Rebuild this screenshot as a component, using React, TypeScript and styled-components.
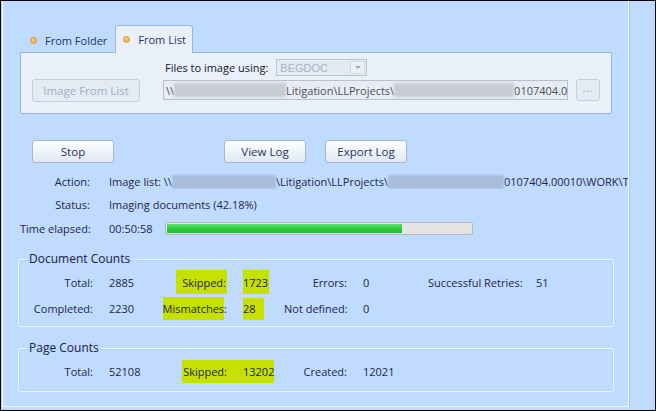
import React from "react";
import styled, { createGlobalStyle } from "styled-components";

const GlobalStyle = createGlobalStyle`
  html, body {
    margin: 0;
    padding: 0;
    background: #ffffff;
  }
  body {
    font-family: "Open Sans", "Noto Sans", "DejaVu Sans", sans-serif;
    font-size: 11px;
    color: #1f2548;
  }
`;

const BLUE = "#bfdbff";

const Frame = styled.div`
  width: 656px;
  height: 411px;
  box-sizing: border-box;
  border: 1px solid #000;
  background: ${BLUE};
  display: flex;
  overflow: hidden;
`;

const MainPanel = styled.div`
  width: 627px;
  height: 406px;
  margin-left: 1px;
  box-sizing: border-box;
  border: 1px solid #eef5ff;
  border-top: none;
  box-shadow: 1px 0 0 #a8c6ee;
  padding: 24px 16px 0 17px;
  overflow: hidden;
`;

const TabStrip = styled.div`
  display: flex;
  align-items: flex-end;
  height: 27px;
  padding-left: 2px;
  gap: 1px;
`;

const Tab = styled.div<{ $active?: boolean }>`
  display: flex;
  align-items: center;
  box-sizing: border-box;
  height: ${(p) => (p.$active ? "28px" : "24px")};
  padding: 0 6px ${(p) => (p.$active ? "1px" : "0")} 7px;
  color: #1d3368;
  font-size: 11px;
  margin-bottom: ${(p) => (p.$active ? "-1px" : "0")};
  background: ${(p) => (p.$active ? "#e9f0fa" : "transparent")};
  border: 1px solid ${(p) => (p.$active ? "#98b6e0" : "transparent")};
  border-bottom: none;
  border-radius: 3px 3px 0 0;
`;

const Dot = styled.span`
  width: 5px;
  height: 5px;
  border-radius: 50%;
  background: radial-gradient(circle at 40% 40%, #ffd08a, #f39a2c);
  border: 1px solid #e6912e;
  margin-right: 8px;
`;

const TabPanel = styled.div`
  box-sizing: border-box;
  height: 62px;
  background: #e9f0fa;
  border: 1px solid #98b6e0;
  border-radius: 0 0 2px 2px;
  padding: 6px 10px 0 11px;
  display: grid;
  grid-template-columns: 108px 23px 405px 8px 24px;
  grid-template-rows: 17px 22px;
  row-gap: 3px;
  align-items: center;
`;

const FilesRow = styled.div`
  grid-column: 3 / 6;
  grid-row: 1;
  display: flex;
  align-items: center;
  gap: 8px;
  padding-left: 2px;
  color: #15152a;
`;

const Combo = styled.div`
  width: 91px;
  height: 17px;
  box-sizing: border-box;
  border: 1px solid #b9c6d6;
  background: #e3eaf4;
  display: flex;
  align-items: center;
  justify-content: space-between;
  padding: 0 1px 0 3px;
  color: #a9b2bf;
  font-family: "Liberation Sans", Arial, sans-serif;
  font-size: 11px;
`;

const ComboArrow = styled.span`
  width: 15px;
  height: 13px;
  box-sizing: border-box;
  border: 1px solid #d3dbe6;
  background: #edf1f7;
  display: flex;
  align-items: center;
  justify-content: center;
  &::after {
    content: "";
    border-left: 3px solid transparent;
    border-right: 3px solid transparent;
    border-top: 3px solid #9aa4b2;
  }
`;

const Button = styled.button<{ $w?: number; $disabled?: boolean }>`
  width: ${(p) => p.$w ?? 82}px;
  height: 23px;
  box-sizing: border-box;
  border: 1px solid ${(p) => (p.$disabled ? "#c3cedf" : "#a4b6d0")};
  border-radius: 3px;
  background: ${(p) =>
    p.$disabled
      ? "#e4ebf5"
      : "linear-gradient(to bottom, #ffffff 0%, #f1f5fb 45%, #dfe7f2 100%)"};
  color: ${(p) => (p.$disabled ? "#a3adc0" : "#22335c")};
  font-family: inherit;
  font-size: 11.5px;
  padding: 0;
  cursor: default;
`;

const ListButton = styled(Button)`
  grid-column: 1;
  grid-row: 2;
`;

const SmallButton = styled(Button)`
  grid-column: 5;
  grid-row: 2;
  width: 24px;
  height: 22px;
  color: #a0a9b8;
  font-size: 10px;
  letter-spacing: 1px;
  padding-bottom: 4px;
`;

const TextBox = styled.div`
  grid-column: 3;
  grid-row: 2;
  height: 20px;
  box-sizing: border-box;
  border: 1px solid #b6c1cf;
  background: #e7ecf3;
  display: flex;
  align-items: center;
  padding-left: 2px;
  white-space: nowrap;
  overflow: hidden;
  color: #4a4e5a;
`;

const Blur = styled.span<{ $w: number; $light?: boolean }>`
  display: inline-block;
  width: ${(p) => p.$w}px;
  height: 14px;
  flex-shrink: 0;
  background: ${(p) => (p.$light ? "#c8cdd4" : "#a9bddb")};
  filter: blur(1.2px);
  vertical-align: middle;
`;

const ButtonRow = styled.div`
  display: flex;
  margin-top: 26px;
  padding-left: 12px;
`;

const Spacer = styled.span<{ $w: number }>`
  width: ${(p) => p.$w}px;
  flex-shrink: 0;
`;

const InfoList = styled.div`
  margin-top: 7px;
  margin-right: -16px;
`;

const InfoRow = styled.div<{ $h?: number }>`
  display: grid;
  grid-template-columns: 70px 1fr;
  column-gap: 19px;
  align-items: center;
  height: ${(p) => p.$h ?? 23}px;
`;

const Label = styled.span`
  text-align: right;
  white-space: nowrap;
`;

const Value = styled.span`
  display: flex;
  align-items: center;
  white-space: nowrap;
  overflow: hidden;
`;

const Elapsed = styled.span`
  width: 56px;
  flex-shrink: 0;
`;

const Progress = styled.div`
  width: 308px;
  height: 13px;
  box-sizing: border-box;
  border: 1px solid #b4b8be;
  border-radius: 2px;
  background: #e4e4e4;
  padding: 1px;
`;

const ProgressFill = styled.div`
  height: 100%;
  background: linear-gradient(to bottom, #5fe06a 0%, #2dcb3c 50%, #22be32 100%);
`;

const Group = styled.fieldset<{ $top: number; $pb: number }>`
  margin: ${(p) => p.$top}px -2px 0 -2px;
  padding: 0 0 ${(p) => p.$pb}px 0;
  min-width: 0;
  border: 1px solid #eaf3ff;
  border-radius: 3px;
  box-shadow: inset 0 0 0 1px rgba(160, 195, 240, 0.35);
`;

const Legend = styled.legend`
  margin-left: 8px;
  padding: 0 2px;
  line-height: 16px;
  font-size: 12px;
  color: #20203f;
`;

const CountRow = styled.div`
  display: grid;
  grid-template-columns: 90px 52px 82px 41px 79px 65px 108px auto;
  align-items: center;
  height: 26px;
  margin-top: 2px;
  & + & {
    margin-top: 0;
  }
`;

const CLabel = styled.span<{ $flush?: boolean; $left?: boolean }>`
  text-align: ${(p) => (p.$left ? "left" : "right")};
  padding-right: ${(p) => (p.$flush || p.$left ? 0 : 16)}px;
  white-space: nowrap;
`;

const CValue = styled.span`
  white-space: nowrap;
`;

const Mark = styled.span<{ $pl?: number; $pr?: number; $pt?: number; $pb?: number }>`
  background: #c6e000;
  padding: ${(p) => p.$pt ?? 3}px ${(p) => p.$pr ?? 1}px ${(p) => p.$pb ?? 3}px
    ${(p) => p.$pl ?? 1}px;
`;

const RightStrip = styled.div`
  flex: 1;
`;

export default function App() {
  const progress = 77.3;

  return (
    <>
      <GlobalStyle />
      <Frame>
        <MainPanel>
          <TabStrip>
            <Tab>
              <Dot />
              From Folder
            </Tab>
            <Tab $active>
              <Dot />
              From List
            </Tab>
          </TabStrip>
          <TabPanel>
            <FilesRow>
              Files to image using:
              <Combo>
                BEGDOC
                <ComboArrow />
              </Combo>
            </FilesRow>
            <ListButton $w={108} $disabled>
              Image From List
            </ListButton>
            <TextBox>
              \\
              <Blur $w={112} $light />
              Litigation\LLProjects\
              <Blur $w={120} $light />
              0107404.0
            </TextBox>
            <SmallButton $disabled>...</SmallButton>
          </TabPanel>

          <ButtonRow>
            <Button>Stop</Button>
            <Spacer $w={110} />
            <Button>View Log</Button>
            <Spacer $w={19} />
            <Button>Export Log</Button>
          </ButtonRow>

          <InfoList>
            <InfoRow>
              <Label>Action:</Label>
              <Value>
                Image list: \\
                <Blur $w={104} />
                \Litigation\LLProjects\
                <Blur $w={116} />
                0107404.00010\WORK\Ti
              </Value>
            </InfoRow>
            <InfoRow>
              <Label>Status:</Label>
              <Value>Imaging documents (42.18%)</Value>
            </InfoRow>
            <InfoRow $h={25}>
              <Label>Time elapsed:</Label>
              <Value>
                <Elapsed>00:50:58</Elapsed>
                <Progress>
                  <ProgressFill style={{ width: `${progress}%` }} />
                </Progress>
              </Value>
            </InfoRow>
          </InfoList>

          <Group $top={10} $pb={5}>
            <Legend>Document Counts</Legend>
            <CountRow>
              <CLabel>Total:</CLabel>
              <CValue>2885</CValue>
              <CLabel>
                <Mark $pl={6} $pt={5} $pb={4}>Skipped:</Mark>
              </CLabel>
              <CValue>
                <Mark $pl={0} $pt={5} $pb={4}>1723</Mark>
              </CValue>
              <CLabel>Errors:</CLabel>
              <CValue>0</CValue>
              <CLabel $left>Successful Retries:</CLabel>
              <CValue>51</CValue>
            </CountRow>
            <CountRow>
              <CLabel>Completed:</CLabel>
              <CValue>2230</CValue>
              <CLabel>
                <Mark $pl={0} $pr={0} $pt={4} $pb={4}>Mismatches</Mark>:
              </CLabel>
              <CValue>
                <Mark $pl={0} $pr={8} $pt={3} $pb={4}>28</Mark>
              </CValue>
              <CLabel>Not defined:</CLabel>
              <CValue>0</CValue>
            </CountRow>
          </Group>

          <Group $top={13} $pb={7}>
            <Legend>Page Counts</Legend>
            <CountRow>
              <CLabel>Total:</CLabel>
              <CValue>52108</CValue>
              <CLabel $flush>
                <Mark $pl={1} $pr={16} $pt={4} $pb={4}>Skipped:</Mark>
              </CLabel>
              <CValue>
                <Mark $pl={0} $pr={0} $pt={4} $pb={4}>13202</Mark>
              </CValue>
              <CLabel>Created:</CLabel>
              <CValue>12021</CValue>
            </CountRow>
          </Group>
        </MainPanel>
        <RightStrip />
      </Frame>
    </>
  );
}
